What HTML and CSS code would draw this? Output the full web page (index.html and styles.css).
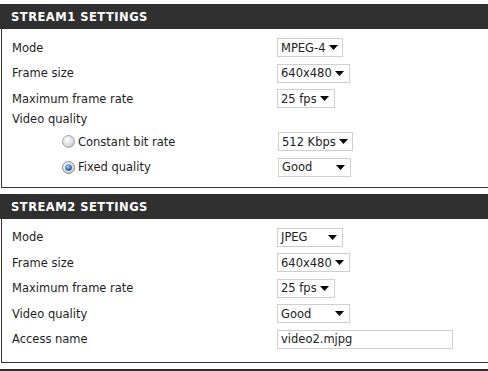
FILE: index.html
```html
<!DOCTYPE html>
<html lang="en">
<head>
    <meta charset="UTF-8">
    <title>Video Settings</title>
    <link rel="stylesheet" href="styles.css">
</head>
<body>
    <div class="section">
        <div class="section-head">STREAM1 SETTINGS</div>
        <div class="section-body">
            <div class="row">
                <span class="label">Mode</span>
                <div class="select w66">MPEG-4<svg class="arrow" width="9" height="5" viewBox="0 0 9 5"><path d="M0 0H9L4.5 5Z"/></svg></div>
            </div>
            <div class="row">
                <span class="label">Frame size</span>
                <div class="select w73">640x480<svg class="arrow" width="9" height="5" viewBox="0 0 9 5"><path d="M0 0H9L4.5 5Z"/></svg></div>
            </div>
            <div class="row">
                <span class="label">Maximum frame rate</span>
                <div class="select w58">25 fps<svg class="arrow" width="9" height="5" viewBox="0 0 9 5"><path d="M0 0H9L4.5 5Z"/></svg></div>
            </div>
            <div class="row row-text">
                <span class="label">Video quality</span>
            </div>
            <div class="row">
                <span class="label sub">
                    <svg class="radio" width="13" height="13" viewBox="0 0 13 13">
                        <defs>
                            <radialGradient id="rg1" cx="0.4" cy="0.35" r="0.7">
                                <stop offset="0" stop-color="#ffffff"/>
                                <stop offset="1" stop-color="#c9c9c9"/>
                            </radialGradient>
                        </defs>
                        <circle cx="6.5" cy="6.5" r="6" fill="url(#rg1)" stroke="#a3a3a3"/>
                    </svg>
                    Constant bit rate
                </span>
                <div class="select w75 shift">512 Kbps<svg class="arrow" width="9" height="5" viewBox="0 0 9 5"><path d="M0 0H9L4.5 5Z"/></svg></div>
            </div>
            <div class="row">
                <span class="label sub">
                    <svg class="radio" width="13" height="13" viewBox="0 0 13 13">
                        <defs>
                            <radialGradient id="rg2" cx="0.4" cy="0.35" r="0.7">
                                <stop offset="0" stop-color="#ffffff"/>
                                <stop offset="1" stop-color="#c9c9c9"/>
                            </radialGradient>
                            <radialGradient id="dot" cx="0.4" cy="0.35" r="0.7">
                                <stop offset="0" stop-color="#9fd0ff"/>
                                <stop offset="1" stop-color="#0c3f86"/>
                            </radialGradient>
                        </defs>
                        <circle cx="6.5" cy="6.5" r="6" fill="url(#rg2)" stroke="#8c8c8c"/>
                        <circle cx="6.5" cy="6.5" r="3.3" fill="url(#dot)"/>
                    </svg>
                    Fixed quality
                </span>
                <div class="select w73 shift">Good<svg class="arrow" width="9" height="5" viewBox="0 0 9 5"><path d="M0 0H9L4.5 5Z"/></svg></div>
            </div>
        </div>
    </div>

    <div class="section">
        <div class="section-head">STREAM2 SETTINGS</div>
        <div class="section-body body2">
            <div class="row">
                <span class="label">Mode</span>
                <div class="select w66">JPEG<svg class="arrow" width="9" height="5" viewBox="0 0 9 5"><path d="M0 0H9L4.5 5Z"/></svg></div>
            </div>
            <div class="row">
                <span class="label">Frame size</span>
                <div class="select w73">640x480<svg class="arrow" width="9" height="5" viewBox="0 0 9 5"><path d="M0 0H9L4.5 5Z"/></svg></div>
            </div>
            <div class="row">
                <span class="label">Maximum frame rate</span>
                <div class="select w58">25 fps<svg class="arrow" width="9" height="5" viewBox="0 0 9 5"><path d="M0 0H9L4.5 5Z"/></svg></div>
            </div>
            <div class="row">
                <span class="label">Video quality</span>
                <div class="select w73">Good<svg class="arrow" width="9" height="5" viewBox="0 0 9 5"><path d="M0 0H9L4.5 5Z"/></svg></div>
            </div>
            <div class="row">
                <span class="label">Access name</span>
                <div class="textbox">video2.mjpg</div>
            </div>
        </div>
    </div>

    <div class="section">
        <div class="section-head section-head-cut"></div>
    </div>
</body>
</html>
```

FILE: styles.css
```css
/* video settings */
body {
    margin: 0;
    background-color: #fff;
    font-family: "DejaVu Sans", sans-serif;
    font-size: 11.5px;
    color: #1e1e1e;
}

.section {
    padding-top: 4px;
}

.section + .section {
    padding-top: 6px;
}

.section-head {
    height: 25px;
    line-height: 26px;
    background-color: #303030;
    color: #fff;
    font-weight: bold;
    font-size: 11.5px;
    letter-spacing: 0.5px;
    padding-left: 11px;
}

.section-head-cut {
    height: 4px;
}

.section-body {
    margin-left: 1px;
    border-left: 1px solid #333;
    border-bottom: 1px solid #333;
    padding: 9px 0 10px 10px;
}

.body2 {
    padding-bottom: 13px;
}

.row {
    display: flex;
    align-items: center;
    height: 19px;
    margin-bottom: 6.5px;
}

.row:last-child {
    margin-bottom: 0;
}

.row-text {
    height: 16px;
    margin-top: -3.5px;
    margin-bottom: 5px;
}

.label {
    width: 265px;
    flex: none;
    display: flex;
    align-items: center;
    white-space: nowrap;
}

.label.sub {
    padding-left: 50px;
    box-sizing: border-box;
}

.radio {
    margin-right: 3px;
}

.select {
    box-sizing: border-box;
    height: 19px;
    border: 1px solid #cfcfcf;
    background-color: #fff;
    display: flex;
    align-items: center;
    justify-content: space-between;
    padding: 0 5px 0 3px;
    white-space: nowrap;
    color: #222;
}

.select.shift {
    margin-left: 1px;
}

.arrow {
    fill: #000;
    flex: none;
    margin-left: 3px;
}

.w58 { width: 58px; }
.w66 { width: 66px; }
.w73 { width: 73px; }
.w75 { width: 75px; }

.textbox {
    box-sizing: border-box;
    width: 176px;
    height: 19px;
    border: 1px solid #cfcfcf;
    padding-left: 3px;
    line-height: 17px;
    white-space: nowrap;
    color: #222;
}
```
